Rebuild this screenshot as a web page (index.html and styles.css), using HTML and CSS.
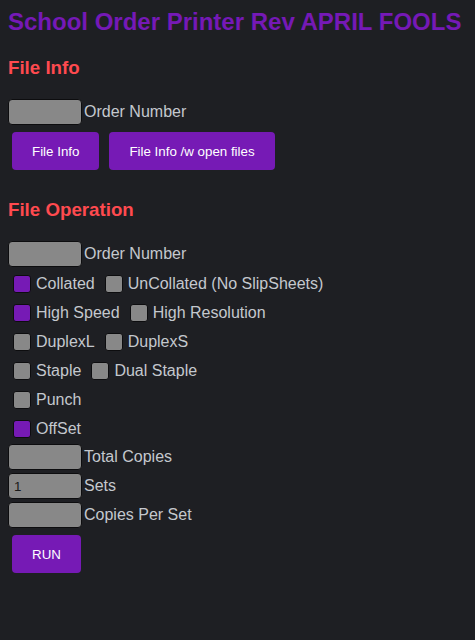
FILE: index.html
```html
<!DOCTYPE html>
<html>
<head>
<meta charset="utf-8">
<link rel="stylesheet" href="styles.css">
</head>
<body>
<h1 class="title">School Order Printer Rev APRIL FOOLS</h1>

<h3 class="section">File Info</h3>
<div class="field"><input class="box" type="text"><span>Order Number</span></div>
<div class="btns">
  <button class="btn">File Info</button>
  <button class="btn">File Info /w open files</button>
</div>

<h3 class="section op">File Operation</h3>
<div class="field"><input class="box" type="text"><span>Order Number</span></div>
<div class="opts">
  <div class="row">
    <label class="opt"><input class="chk" type="checkbox" checked><span>Collated</span></label>
    <label class="opt"><input class="chk" type="checkbox"><span>UnCollated (No SlipSheets)</span></label>
  </div>
  <div class="row">
    <label class="opt"><input class="chk" type="checkbox" checked><span>High Speed</span></label>
    <label class="opt"><input class="chk" type="checkbox"><span>High Resolution</span></label>
  </div>
  <div class="row">
    <label class="opt"><input class="chk" type="checkbox"><span>DuplexL</span></label>
    <label class="opt"><input class="chk" type="checkbox"><span>DuplexS</span></label>
  </div>
  <div class="row">
    <label class="opt"><input class="chk" type="checkbox"><span>Staple</span></label>
    <label class="opt"><input class="chk" type="checkbox"><span>Dual Staple</span></label>
  </div>
  <div class="row">
    <label class="opt"><input class="chk" type="checkbox"><span>Punch</span></label>
  </div>
  <div class="row">
    <label class="opt"><input class="chk" type="checkbox" checked><span>OffSet</span></label>
  </div>
</div>
<div class="counts">
  <div class="field"><input class="box" type="text"><span>Total Copies</span></div>
  <div class="field"><input class="box" type="text" value="1"><span>Sets</span></div>
  <div class="field"><input class="box" type="text"><span>Copies Per Set</span></div>
</div>
<div class="btns run">
  <button class="btn">RUN</button>
</div>
</body>
</html>
```
FILE: styles.css
```css
html, body {
  background: #1e1f23;
}
body {
  margin: 8px;
  font-family: "Liberation Sans", Arial, sans-serif;
  font-size: 16px;
  color: #c4c8ce;
}
.title {
  margin: 0;
  font-size: 24px;
  font-weight: bold;
  color: #7519b6;
}
.section {
  margin: 21px 0 20px 0;
  font-size: 18.72px;
  font-weight: bold;
  color: #ff4a4f;
}
.section.op {
  margin-top: 29px;
  margin-bottom: 20px;
}
.field {
  display: flex;
  align-items: center;
  height: 26px;
}
.box {
  box-sizing: border-box;
  width: 74px;
  height: 26px;
  margin: 0 2px 0 0;
  padding: 0 5px;
  background: #888888;
  border: 1px solid #0d0d0f;
  border-radius: 4px;
  font-family: "Liberation Sans", Arial, sans-serif;
  font-size: 13.333px;
  color: #1a1a1a;
  outline: none;
}
.btns {
  display: flex;
  gap: 10px;
  margin: 7px 0 0 4px;
}
.btn {
  height: 38px;
  padding: 0 20px;
  background: #761ab5;
  border: none;
  border-radius: 4px;
  color: #ffffff;
  font-family: "Liberation Sans", Arial, sans-serif;
  font-size: 13.333px;
}
.opts {
  display: flex;
  flex-direction: column;
  margin-top: 2px;
}
.row {
  display: flex;
  align-items: center;
  gap: 5px;
  height: 29px;
}
.opt {
  display: flex;
  align-items: center;
  gap: 5px;
}
.chk {
  appearance: none;
  -webkit-appearance: none;
  box-sizing: border-box;
  width: 18px;
  height: 18px;
  margin: 0 0 0 5px;
  background: #888888;
  border: 1px solid #0d0d0f;
  border-radius: 3px;
}
.chk:checked {
  background: #761ab5;
}
.counts {
  display: flex;
  flex-direction: column;
  gap: 3px;
  margin-top: 1px;
}
.run {
  margin-top: 7px;
}
```
